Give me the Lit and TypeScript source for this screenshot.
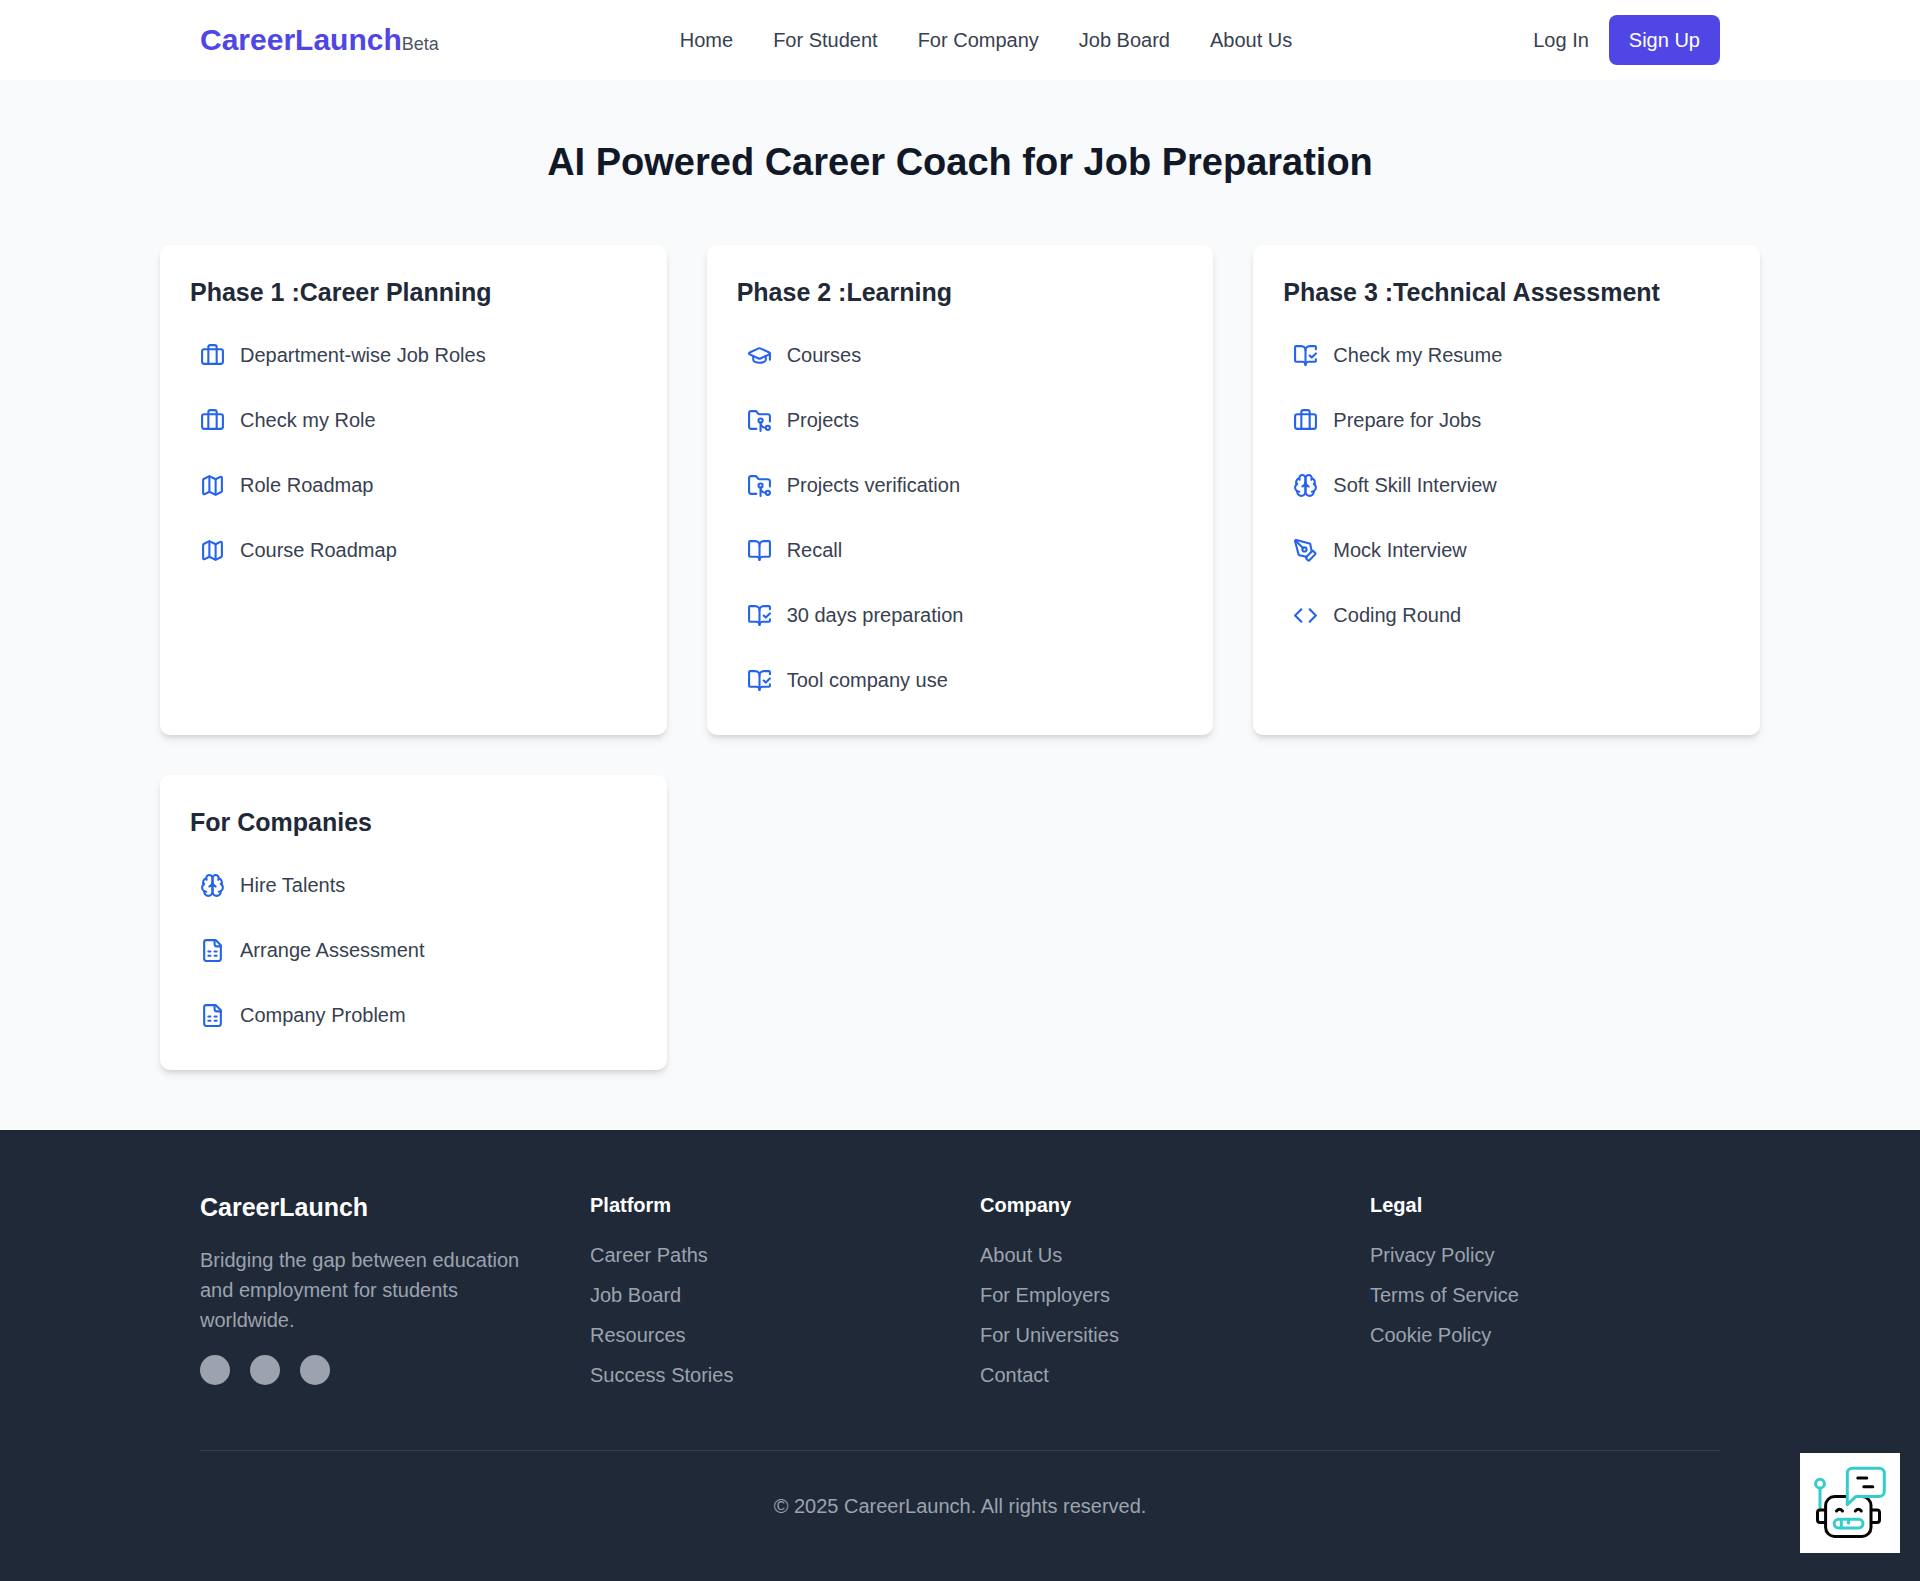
import { LitElement, html, svg, css, type TemplateResult } from "lit";
import { customElement, property } from "lit/decorators.js";

type IconName =
  | "briefcase"
  | "map"
  | "cap"
  | "folder"
  | "book"
  | "bookCheck"
  | "brain"
  | "pen"
  | "code"
  | "sheet";

const ICONS: Record<IconName, TemplateResult> = {
  briefcase: svg`<path d="M16 20V4a2 2 0 0 0-2-2h-4a2 2 0 0 0-2 2v16"/><rect width="20" height="14" x="2" y="6" rx="2"/>`,
  map: svg`<path d="M14.106 5.553a2 2 0 0 0 1.788 0l3.659-1.83A1 1 0 0 1 21 4.619v12.764a1 1 0 0 1-.553.894l-4.553 2.277a2 2 0 0 1-1.788 0l-4.212-2.106a2 2 0 0 0-1.788 0l-3.659 1.83A1 1 0 0 1 3 19.381V6.618a1 1 0 0 1 .553-.894l4.553-2.277a2 2 0 0 1 1.788 0z"/><path d="M15 5.764v15"/><path d="M9 3.236v15"/>`,
  cap: svg`<path d="M21.42 10.922a1 1 0 0 0-.019-1.838L12.83 5.18a2 2 0 0 0-1.66 0L2.6 9.08a1 1 0 0 0 0 1.832l8.57 3.908a2 2 0 0 0 1.66 0z"/><path d="M22 10v6"/><path d="M6 12.5V16a6 3 0 0 0 12 0v-3.5"/>`,
  folder: svg`<path d="M9 20H4a2 2 0 0 1-2-2V5a2 2 0 0 1 2-2h3.9a2 2 0 0 1 1.69.9l.81 1.2a2 2 0 0 0 1.67.9H20a2 2 0 0 1 2 2v5"/><circle cx="13" cy="12" r="2"/><path d="M18 19c-2.8 0-5-2.2-5-5v8"/><circle cx="20" cy="19" r="2"/>`,
  book: svg`<path d="M12 7v14"/><path d="M3 18a1 1 0 0 1-1-1V4a1 1 0 0 1 1-1h5a4 4 0 0 1 4 4 4 4 0 0 1 4-4h5a1 1 0 0 1 1 1v13a1 1 0 0 1-1 1h-6a3 3 0 0 0-3 3 3 3 0 0 0-3-3z"/>`,
  bookCheck: svg`<path d="M12 21V7"/><path d="m16 12 2 2 4-4"/><path d="M22 6V4a1 1 0 0 0-1-1h-5a4 4 0 0 0-4 4 4 4 0 0 0-4-4H3a1 1 0 0 0-1 1v13a1 1 0 0 0 1 1h6a3 3 0 0 1 3 3 3 3 0 0 1 3-3h6a1 1 0 0 0 1-1v-1.3"/>`,
  brain: svg`<path d="M12 5a3 3 0 1 0-5.997.125 4 4 0 0 0-2.526 5.77 4 4 0 0 0 .556 6.588A4 4 0 1 0 12 18Z"/><path d="M12 5a3 3 0 1 1 5.997.125 4 4 0 0 1 2.526 5.77 4 4 0 0 1-.556 6.588A4 4 0 1 1 12 18Z"/><path d="M15 13a4.5 4.5 0 0 1-3-4 4.5 4.5 0 0 1-3 4"/><path d="M17.599 6.5a3 3 0 0 0 .399-1.375"/><path d="M6.003 5.125A3 3 0 0 0 6.401 6.5"/><path d="M3.477 10.896a4 4 0 0 1 .585-.396"/><path d="M19.938 10.5a4 4 0 0 1 .585.396"/><path d="M6 18a4 4 0 0 1-1.967-.516"/><path d="M19.967 17.484A4 4 0 0 1 18 18"/>`,
  pen: svg`<path d="M15.707 21.293a1 1 0 0 1-1.414 0l-1.586-1.586a1 1 0 0 1 0-1.414l5.586-5.586a1 1 0 0 1 1.414 0l1.586 1.586a1 1 0 0 1 0 1.414z"/><path d="m18 13-1.375-6.874a1 1 0 0 0-.746-.776L3.235 2.028a1 1 0 0 0-1.207 1.207L5.35 15.879a1 1 0 0 0 .776.746L13 18"/><path d="m2.3 2.3 7.286 7.286"/><circle cx="11" cy="11" r="2"/>`,
  code: svg`<path d="m16 18 6-6-6-6"/><path d="m8 6-6 6 6 6"/>`,
  sheet: svg`<path d="M15 2H6a2 2 0 0 0-2 2v16a2 2 0 0 0 2 2h12a2 2 0 0 0 2-2V7Z"/><path d="M14 2v4a2 2 0 0 0 2 2h4"/><path d="M8 13h2"/><path d="M14 13h2"/><path d="M8 17h2"/><path d="M14 17h2"/>`,
};

interface PhaseItem {
  icon: IconName;
  label: string;
}

interface Phase {
  title: string;
  items: PhaseItem[];
}

const NAV = ["Home", "For Student", "For Company", "Job Board", "About Us"];

const PHASES: Phase[] = [
  {
    title: "Phase 1 :Career Planning",
    items: [
      { icon: "briefcase", label: "Department-wise Job Roles" },
      { icon: "briefcase", label: "Check my Role" },
      { icon: "map", label: "Role Roadmap" },
      { icon: "map", label: "Course Roadmap" },
    ],
  },
  {
    title: "Phase 2 :Learning",
    items: [
      { icon: "cap", label: "Courses" },
      { icon: "folder", label: "Projects" },
      { icon: "folder", label: "Projects verification" },
      { icon: "book", label: "Recall" },
      { icon: "bookCheck", label: "30 days preparation" },
      { icon: "bookCheck", label: "Tool company use" },
    ],
  },
  {
    title: "Phase 3 :Technical Assessment",
    items: [
      { icon: "bookCheck", label: "Check my Resume" },
      { icon: "briefcase", label: "Prepare for Jobs" },
      { icon: "brain", label: "Soft Skill Interview" },
      { icon: "pen", label: "Mock Interview" },
      { icon: "code", label: "Coding Round" },
    ],
  },
  {
    title: "For Companies",
    items: [
      { icon: "brain", label: "Hire Talents" },
      { icon: "sheet", label: "Arrange Assessment" },
      { icon: "sheet", label: "Company Problem" },
    ],
  },
];

const FOOTER_COLUMNS = [
  { title: "Platform", links: ["Career Paths", "Job Board", "Resources", "Success Stories"] },
  { title: "Company", links: ["About Us", "For Employers", "For Universities", "Contact"] },
  { title: "Legal", links: ["Privacy Policy", "Terms of Service", "Cookie Policy"] },
];

const SOCIAL = ["Facebook", "Twitter", "LinkedIn"];

const shared = css`
  * {
    box-sizing: border-box;
    margin: 0;
  }
  ul {
    list-style: none;
    padding: 0;
  }
  a {
    color: inherit;
    text-decoration: none;
  }
`;

@customElement("site-header")
export class SiteHeader extends LitElement {
  static styles = [
    shared,
    css`
      :host {
        display: block;
        background: #fff;
      }
      .bar {
        display: flex;
        align-items: center;
        justify-content: space-between;
        flex-wrap: wrap;
        max-width: 1600px;
        min-height: 80px;
        margin: 0 auto;
        padding: 0 40px;
      }
      .logo {
        font-size: 30px;
        line-height: 40px;
        font-weight: 700;
        color: #4f46e5;
      }
      .beta {
        font-size: 18px;
        line-height: 25px;
        font-weight: 400;
        color: #4b5563;
      }
      .nav {
        display: flex;
        flex-wrap: wrap;
        gap: 40px;
      }
      .actions {
        display: flex;
        align-items: center;
        gap: 20px;
      }
      .signup {
        padding: 10px 20px;
        border: 0;
        border-radius: 8px;
        background: #4f46e5;
        color: #fff;
        font: inherit;
        cursor: pointer;
      }
    `,
  ];

  render() {
    return html`
      <header class="bar">
        <a class="logo" href="#">CareerLaunch<span class="beta">Beta</span></a>
        <nav class="nav">${NAV.map((n) => html`<a href="#">${n}</a>`)}</nav>
        <div class="actions">
          <a href="#">Log In</a>
          <button class="signup" type="button">Sign Up</button>
        </div>
      </header>
    `;
  }
}

@customElement("phase-card")
export class PhaseCard extends LitElement {
  @property({ attribute: false }) phase!: Phase;

  static styles = [
    shared,
    css`
      :host {
        display: block;
        padding: 30px;
        border-radius: 10px;
        background: #fff;
        box-shadow: 0 5px 8px -1px rgba(0, 0, 0, 0.1), 0 3px 5px -2px rgba(0, 0, 0, 0.1);
      }
      .title {
        margin-bottom: 20px;
        font-size: 25px;
        line-height: 35px;
        font-weight: 700;
        color: #1f2937;
      }
      .list {
        display: flex;
        flex-direction: column;
        gap: 15px;
      }
      .item {
        display: flex;
        align-items: center;
        gap: 15px;
        padding: 10px;
        border-radius: 8px;
      }
      .item:hover {
        background: #f9fafb;
      }
      .icon {
        flex: none;
        width: 25px;
        height: 25px;
        fill: none;
        stroke: #2563eb;
        stroke-width: 2;
        stroke-linecap: round;
        stroke-linejoin: round;
      }
    `,
  ];

  render() {
    return html`
      <h2 class="title">${this.phase.title}</h2>
      <ul class="list">
        ${this.phase.items.map(
          (item) => html`
            <li>
              <a class="item" href="#">
                <svg class="icon" viewBox="0 0 24 24" aria-hidden="true">${ICONS[item.icon]}</svg>
                <span>${item.label}</span>
              </a>
            </li>
          `
        )}
      </ul>
    `;
  }
}

@customElement("site-footer")
export class SiteFooter extends LitElement {
  static styles = [
    shared,
    css`
      :host {
        display: block;
        background: #1f2937;
        color: #9ca3af;
      }
      .inner {
        max-width: 1600px;
        margin: 0 auto;
        padding: 60px 40px;
      }
      .columns {
        display: grid;
        grid-template-columns: repeat(4, minmax(0, 1fr));
        gap: 40px;
      }
      .brand,
      .heading {
        margin-bottom: 20px;
        color: #fff;
        font-size: 20px;
        font-weight: 700;
      }
      .brand {
        font-size: 25px;
        line-height: 35px;
      }
      .social {
        display: flex;
        gap: 20px;
        margin-top: 20px;
      }
      .dot {
        display: block;
        width: 30px;
        height: 30px;
        border-radius: 50%;
        background: #9ca3af;
      }
      .links {
        display: flex;
        flex-direction: column;
        gap: 10px;
      }
      .legal {
        margin-top: 60px;
        padding-top: 40px;
        border-top: 1px solid #374151;
        text-align: center;
      }
      @media (max-width: 900px) {
        .columns {
          grid-template-columns: repeat(2, minmax(0, 1fr));
        }
      }
    `,
  ];

  render() {
    return html`
      <footer class="inner">
        <div class="columns">
          <div>
            <h3 class="brand">CareerLaunch</h3>
            <p>Bridging the gap between education and employment for students worldwide.</p>
            <div class="social">
              ${SOCIAL.map((s) => html`<a class="dot" href="#" aria-label=${s}></a>`)}
            </div>
          </div>
          ${FOOTER_COLUMNS.map(
            (col) => html`
              <div>
                <h4 class="heading">${col.title}</h4>
                <ul class="links">
                  ${col.links.map((l) => html`<li><a href="#">${l}</a></li>`)}
                </ul>
              </div>
            `
          )}
        </div>
        <p class="legal">© 2025 CareerLaunch. All rights reserved.</p>
      </footer>
    `;
  }
}

@customElement("chat-launcher")
export class ChatLauncher extends LitElement {
  static styles = css`
    :host {
      position: fixed;
      right: 20px;
      bottom: 28px;
    }
    .launcher {
      display: block;
      padding: 0;
      border: 0;
      background: #fff;
      cursor: pointer;
    }
    .robot {
      display: block;
      width: 100px;
      height: 100px;
      fill: none;
      stroke-width: 3;
      stroke-linecap: round;
      stroke-linejoin: round;
    }
    .dark {
      stroke: #050505;
    }
    .teal {
      stroke: #35cccc;
    }
    .bubble {
      fill: #fff;
    }
  `;

  render() {
    return html`
      <button class="launcher" type="button" aria-label="Open chat assistant">
        <svg class="robot" viewBox="0 0 100 100" aria-hidden="true">
          <g class="teal">
            <circle cx="20" cy="30.7" r="4.4" />
            <path d="M20 35.2V55" />
          </g>
          <g class="dark">
            <rect x="25.6" y="43.6" width="45.4" height="39.8" rx="9" />
            <path d="M25 57h-5a2.5 2.5 0 0 0-2.5 2.5v7.500a2.5 2.5 0 0 0 2.5 2.5h5" />
            <path d="M72 57h5a2.5 2.5 0 0 1 2.5 2.5v7.500a2.5 2.5 0 0 1-2.5 2.5h-5" />
            <path d="M36.5 58q3-3.600 6 0M55.300 58q3-3.600 6 0" />
          </g>
          <g class="teal">
            <path class="bubble" d="M47.300 51.600V20.200a5 5 0 0 1 5-5h27a5 5 0 0 1 5 5v18.200a5 5 0 0 1-5 5H56z" />
            <rect x="34.200" y="66.200" width="28.800" height="8.800" rx="4.400" />
            <path d="M41.300 66.500v8M48.500 67v3" />
          </g>
          <path class="dark" d="M57.800 25h9M63.800 33.700h9" />
        </svg>
      </button>
    `;
  }
}

@customElement("app-root")
export class AppRoot extends LitElement {
  static styles = [
    shared,
    css`
      :host {
        display: block;
        background: #f9fafb;
        color: #374151;
        font-family: "Liberation Sans", Arial, sans-serif;
        font-size: 20px;
        line-height: 30px;
      }
      .main {
        max-width: 1600px;
        margin: 0 auto;
        padding: 60px 0;
      }
      .title {
        margin-bottom: 60px;
        font-size: 38px;
        line-height: 45px;
        font-weight: 700;
        text-align: center;
        color: #111827;
      }
      .grid {
        display: grid;
        grid-template-columns: repeat(3, minmax(0, 1fr));
        gap: 40px;
      }
      @media (max-width: 1680px) {
        .main {
          padding: 60px 40px;
        }
      }
      @media (max-width: 1200px) {
        .grid {
          grid-template-columns: repeat(2, minmax(0, 1fr));
        }
      }
      @media (max-width: 760px) {
        .grid {
          grid-template-columns: minmax(0, 1fr);
        }
      }
    `,
  ];

  render() {
    return html`
      <site-header></site-header>
      <main class="main">
        <h1 class="title">AI Powered Career Coach for Job Preparation</h1>
        <div class="grid">
          ${PHASES.map((p) => html`<phase-card .phase=${p}></phase-card>`)}
        </div>
      </main>
      <site-footer></site-footer>
      <chat-launcher></chat-launcher>
    `;
  }
}
